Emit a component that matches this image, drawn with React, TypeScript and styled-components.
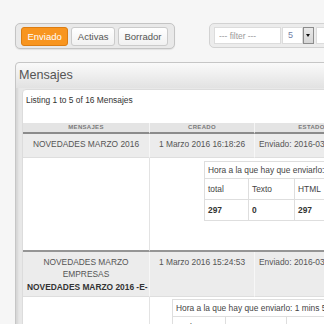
import React from 'react';
import styled, { createGlobalStyle } from 'styled-components';

const GlobalStyle = createGlobalStyle`
  html, body {
    margin: 0;
    padding: 0;
    background: #f6f6f6;
    overflow: hidden;
  }
  body {
    font-family: "Liberation Sans", Arial, sans-serif;
  }
`;

type Message = {
	title: string[]
	subtitle?: string
	created: string
	status: string
	rowHeight: number
	detailHeight: number
	detailLeft: number
	detailTop: number
	colWidths: number[]
	hora: string
	total: string
	texto: string
	html: string
}

const messages: Message[] = [
	{
		title: ['NOVEDADES MARZO 2016'],
		created: '1 Marzo 2016 16:18:26',
		status: 'Enviado: 2016-03-01 16:20:03',
		rowHeight: 24,
		detailHeight: 94,
		detailLeft: 54,
		detailTop: 3,
		colWidths: [44, 46, 60],
		hora: 'Hora a la que hay que enviarlo: 1 mins 52 segs',
		total: '297',
		texto: '0',
		html: '297',
	},
	{
		title: ['NOVEDADES MARZO', 'EMPRESAS'],
		subtitle: 'NOVEDADES MARZO 2016 -E-',
		created: '1 Marzo 2016 15:24:53',
		status: 'Enviado: 2016-03-01 15:26:11',
		rowHeight: 45,
		detailHeight: 90,
		detailLeft: 22,
		detailTop: 2,
		colWidths: [53, 61, 60],
		hora: 'Hora a la que hay que enviarlo: 1 mins 58 segs',
		total: '184',
		texto: '0',
		html: '184',
	},
];

export default function App() {
	return (
		<Page>
			<GlobalStyle />
			<Toolbar>
				<TabGroup>
					<TabButton $active>Enviado</TabButton>
					<TabButton>Activas</TabButton>
					<TabButton>Borrador</TabButton>
				</TabGroup>
				<FilterGroup>
					<FilterInput placeholder="--- filter ---" />
					<PageSize>5</PageSize>
					<DropButton />
					<ExtraBox />
				</FilterGroup>
			</Toolbar>

			<Panel>
				<PanelHeader>Mensajes</PanelHeader>
				<PanelBody>
					<ContentBox>
						<Listing>Listing 1 to 5 of 16 Mensajes</Listing>
						<Grid>
							<HeadCell>Mensajes</HeadCell>
							<HeadCell>Creado</HeadCell>
							<HeadCell>Estado</HeadCell>

							{messages.map((m, i) => (
								<React.Fragment key={i}>
									<Cell $h={m.rowHeight} $align="center">
										{m.title.map((t, j) => <div key={j}>{t}</div>)}
										{m.subtitle && <Strong>{m.subtitle}</Strong>}
									</Cell>
									<Cell $h={m.rowHeight} $align="center">{m.created}</Cell>
									<Cell $h={m.rowHeight} $align="left">{m.status}</Cell>

									<EmptyCell $h={m.detailHeight} />
									<DetailCell $h={m.detailHeight} $left={m.detailLeft} $top={m.detailTop}>
										<Nested style={{ width: m.colWidths.reduce((a, b) => a + b, 0) }}>
											<colgroup>
												{m.colWidths.map((w, k) => <col key={k} style={{ width: w }} />)}
											</colgroup>
											<tbody>
												<tr>
													<HoraCell colSpan={3}>{m.hora}</HoraCell>
												</tr>
												<tr>
													<NCell>total</NCell>
													<NCell>Texto</NCell>
													<NCell>HTML</NCell>
												</tr>
												<tr>
													<NCell $bold>{m.total}</NCell>
													<NCell $bold>{m.texto}</NCell>
													<NCell $bold>{m.html}</NCell>
												</tr>
											</tbody>
										</Nested>
									</DetailCell>
								</React.Fragment>
							))}
						</Grid>
					</ContentBox>
				</PanelBody>
			</Panel>
		</Page>
	);
}

const Page = styled.div`
	width: 560px;
	padding: 23px 0 0 15px;
`

const Toolbar = styled.div`
	display: flex;
	align-items: flex-start;
	gap: 34px;
`

const TabGroup = styled.div`
	display: flex;
	gap: 3px;
	padding: 3px 6px 2px 5px;
	border: 1px solid #c4c4c4;
	border-radius: 5px;
	background: #e9e9e9;
	box-shadow: 0 1px 1px rgba(0, 0, 0, 0.08);
`

const TabButton = styled.div<{ $active?: boolean }>`
	box-sizing: border-box;
	height: 19px;
	padding: 0 5.5px;
	display: flex;
	align-items: center;
	font-size: 9.5px;
	border-radius: 3px;
	border: 1px solid ${p => (p.$active ? '#dc7d12' : '#cbcbcb')};
	background: ${p => (p.$active ? '#f8951f' : 'linear-gradient(#ffffff, #f1f1f1)')};
	color: ${p => (p.$active ? '#ffffff' : '#555555')};
`

const FilterGroup = styled.div`
	display: flex;
	align-items: center;
	gap: 1px;
	padding: 3px 4px;
	border: 1px solid #d2d2d2;
	border-radius: 5px;
	background: #ececec;
`

const FilterInput = styled.input`
	box-sizing: border-box;
	width: 67px;
	height: 17px;
	margin: 0;
	padding: 0 4px;
	border: 1px solid #dcdcdc;
	background: #fff;
	font-family: "Liberation Sans", Arial, sans-serif;
	font-size: 8.4px;
	outline: none;

	&::placeholder {
		color: #9a9a9a;
	}
`

const PageSize = styled.div`
	box-sizing: border-box;
	width: 21px;
	height: 17px;
	padding-left: 5px;
	border: 1px solid #dcdcdc;
	background: #fff;
	color: #7282a6;
	font-size: 9px;
	line-height: 15px;
`

const DropButton = styled.div`
	box-sizing: border-box;
	width: 11px;
	height: 17px;
	margin-left: -1px;
	border: 1px solid #8c8c8c;
	background: linear-gradient(#e9e9e9, #d6d6d6);
	display: flex;
	align-items: center;
	justify-content: center;

	&::after {
		content: '';
		border-left: 2.5px solid transparent;
		border-right: 2.5px solid transparent;
		border-top: 3px solid #111;
	}
`

const ExtraBox = styled.div`
	box-sizing: border-box;
	width: 24px;
	height: 17px;
	margin-left: 1px;
	border: 1px solid #dcdcdc;
	background: #fff;
`

const Panel = styled.div`
	width: 520px;
	margin-top: 13px;
	border: 1px solid #c6c6c6;
	border-radius: 4px 4px 0 0;
	background: #e8e8e8;
	box-shadow: inset 3px 0 2px -1px rgba(0, 0, 0, 0.08);
`

const PanelHeader = styled.div`
	height: 25px;
	padding-left: 3px;
	font-size: 12.6px;
	line-height: 25px;
	color: #555;
	background: linear-gradient(#fafafa, #e2e2e2);
	border-radius: 4px 4px 0 0;
`

const PanelBody = styled.div`
	padding: 1px 0 0 6px;
`

const ContentBox = styled.div`
	background: #fff;
	border: 1px solid #dcdcdc;
	border-radius: 4px 0 0 0;
`

const Listing = styled.div`
	padding: 5px 3px 0;
	margin-bottom: 18px;
	font-size: 8.4px;
	line-height: 10px;
	color: #333;
`

const Grid = styled.div`
	display: grid;
	grid-template-columns: 127px 105px 114px;
`

const HeadCell = styled.div`
	box-sizing: border-box;
	height: 11px;
	background: #e4e4e4;
	border-right: 1px solid #f5f5f5;
	border-bottom: 2px solid #8b8b8b;
	text-align: center;
	text-transform: uppercase;
	font-size: 6px;
	font-weight: bold;
	letter-spacing: 0.3px;
	line-height: 9px;
	color: #7a7a7a;
`

const Cell = styled.div<{ $h: number; $align: 'left' | 'center' }>`
	box-sizing: border-box;
	height: ${p => p.$h}px;
	padding: 3.5px 4px 0;
	background: #ececec;
	border-right: 1px solid #f7f7f7;
	border-bottom: 1px solid #dedede;
	text-align: ${p => p.$align};
	white-space: nowrap;
	font-size: 8.4px;
	line-height: 12.5px;
	color: #555;
`

const Strong = styled.div`
	font-weight: bold;
	color: #333;
`

const EmptyCell = styled.div<{ $h: number }>`
	box-sizing: border-box;
	height: ${p => p.$h}px;
	background: #fff;
	border-right: 1px solid #e3e3e3;
	border-bottom: 2px solid #959595;
`

const DetailCell = styled.div<{ $h: number; $left: number; $top: number }>`
	grid-column: span 2;
	box-sizing: border-box;
	height: ${p => p.$h}px;
	padding: ${p => p.$top}px 0 0 ${p => p.$left}px;
	background: #fff;
	border-bottom: 2px solid #959595;
`

const Nested = styled.table`
	table-layout: fixed;
	border-collapse: collapse;
	font-size: 8.4px;
	color: #444;
	white-space: nowrap;
`

const HoraCell = styled.td`
	height: 16px;
	padding: 0 3px;
	border: 1px solid #dedede;
	overflow: visible;
`

const NCell = styled.td<{ $bold?: boolean }>`
	height: 20px;
	padding: 0 3px;
	border: 1px solid #dedede;
	font-weight: ${p => (p.$bold ? 'bold' : 'normal')};
	color: ${p => (p.$bold ? '#333' : '#444')};
`
